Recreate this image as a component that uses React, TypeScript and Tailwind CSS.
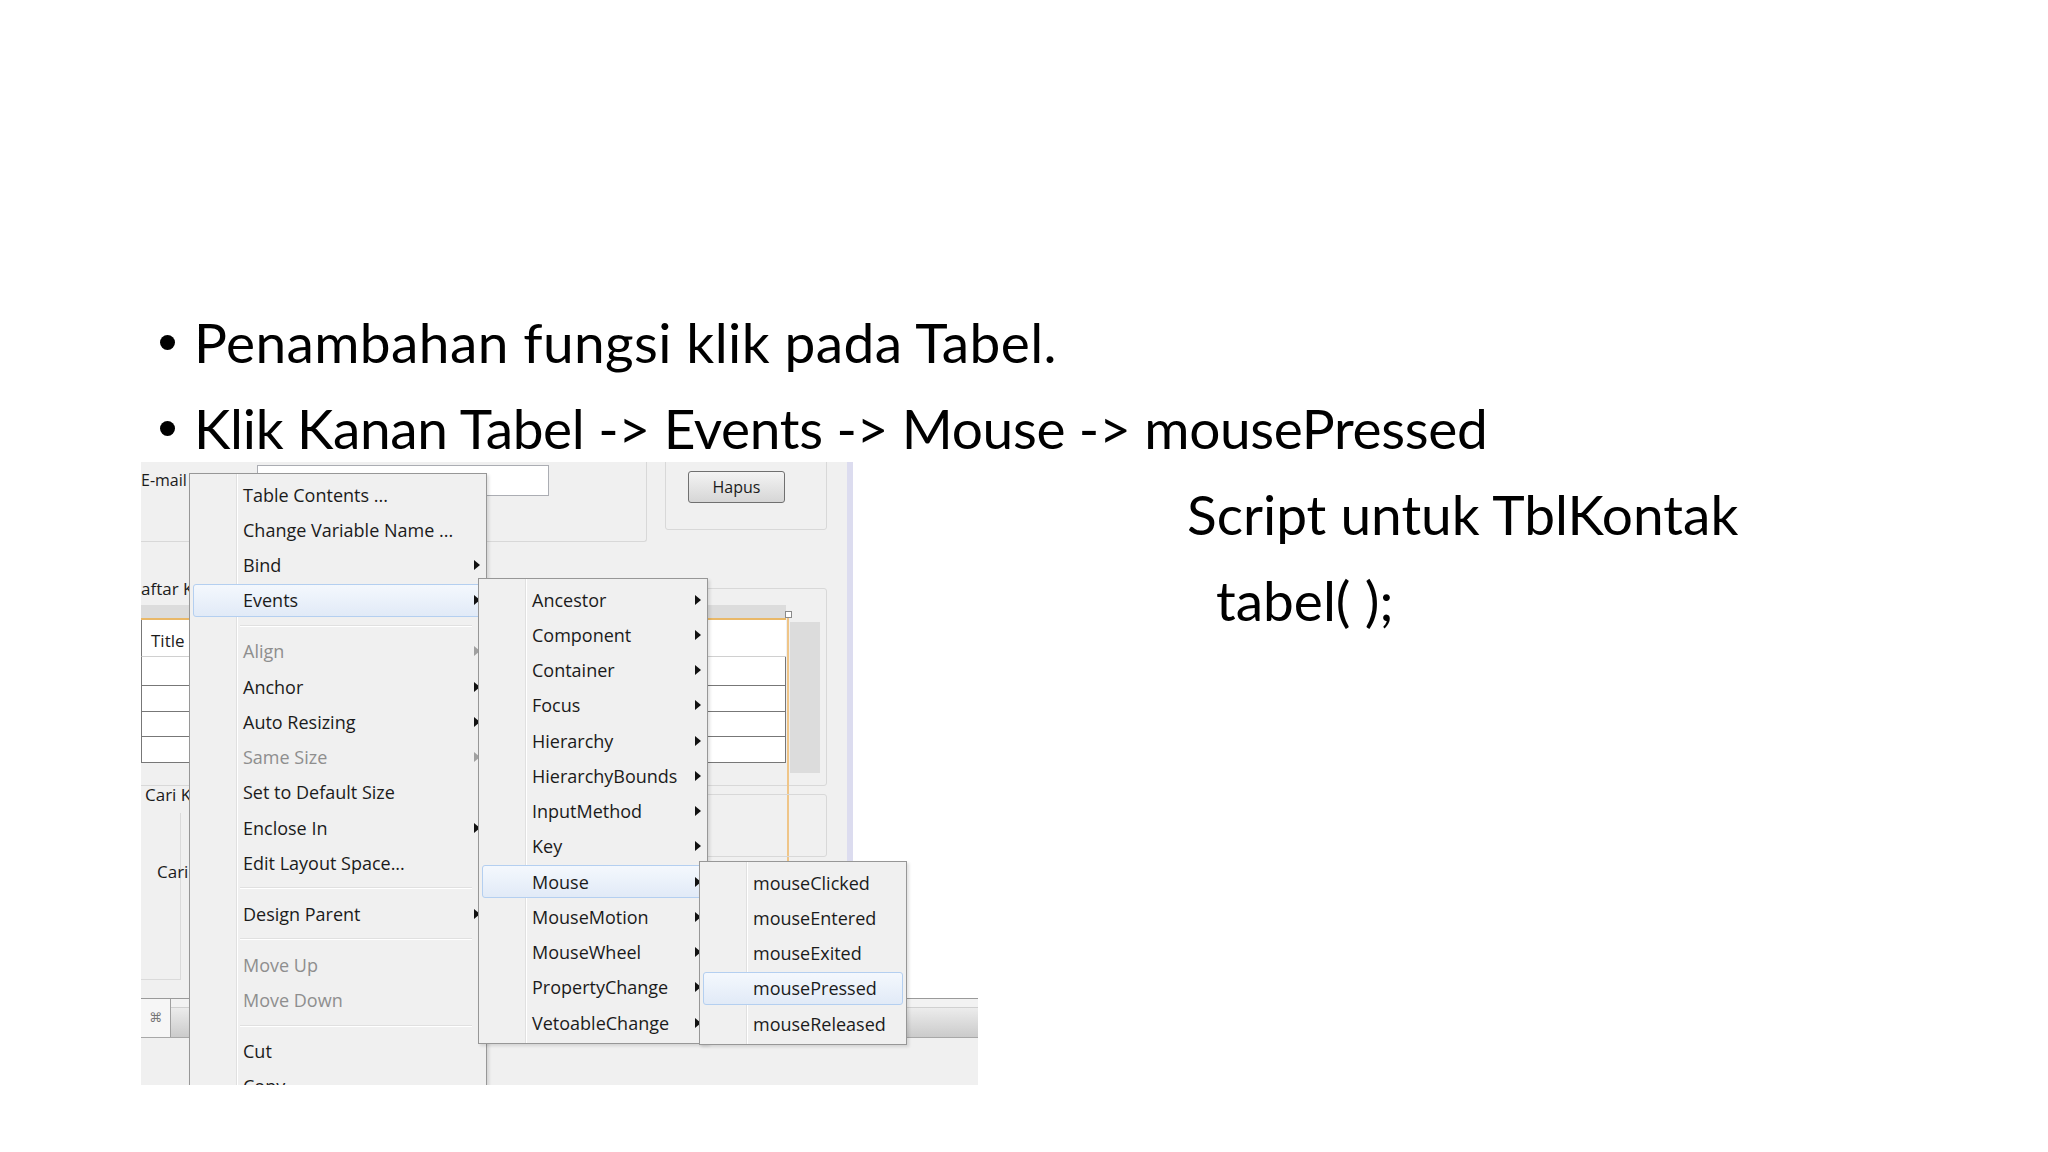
import React from 'react';

type MI = { label: string; disabled?: boolean; arrow?: boolean; hl?: boolean } | 'sep';

const Arrow = ({ gray }: { gray?: boolean }) => (
  <svg width="6" height="10" viewBox="0 0 6 10" className="ml-auto mr-[2px] shrink-0">
    <path d="M0 0 L6 5 L0 10 Z" fill={gray ? '#a0a0a0' : '#111'} />
  </svg>
);

function Menu({ items, className }: { items: MI[]; className: string }) {
  return (
    <div
      className={`absolute z-10 bg-[#f0f0f0] border border-[#979797] py-[3px] shadow-[2px_2px_3px_rgba(0,0,0,0.12)] ${className}`}
    >
      <div className="absolute inset-y-0 left-[46px] w-[2px] border-l border-[#e0e0e0] bg-white" />
      {items.map((it, i) =>
        it === 'sep' ? (
          <div key={i} className="relative h-[15.75px] flex items-center pl-[50px] pr-[14px]">
            <div className="w-full h-[2px] border-t border-[#e0e0e0] bg-white" />
          </div>
        ) : (
          <div key={i} className="relative h-[35.25px] px-[3px] py-[1px] flex">
            <div
              className={`flex-1 flex items-center pl-[49px] rounded-[3px] border ${
                it.hl
                  ? 'border-[#b4cff0] bg-linear-to-b from-[#f4f8fd] to-[#e1eaf7]'
                  : 'border-transparent'
              }`}
            >
              <span
                className={`text-[18px] leading-none whitespace-nowrap ${
                  it.disabled ? 'text-[#8e8e8e]' : 'text-[#1b1b1b]'
                }`}
              >
                {it.label}
              </span>
              {it.arrow && <Arrow gray={it.disabled} />}
            </div>
          </div>
        )
      )}
    </div>
  );
}

const mainItems: MI[] = [
  { label: 'Table Contents ...' },
  { label: 'Change Variable Name ...' },
  { label: 'Bind', arrow: true },
  { label: 'Events', arrow: true, hl: true },
  'sep',
  { label: 'Align', arrow: true, disabled: true },
  { label: 'Anchor', arrow: true },
  { label: 'Auto Resizing', arrow: true },
  { label: 'Same Size', arrow: true, disabled: true },
  { label: 'Set to Default Size' },
  { label: 'Enclose In', arrow: true },
  { label: 'Edit Layout Space...' },
  'sep',
  { label: 'Design Parent', arrow: true },
  'sep',
  { label: 'Move Up', disabled: true },
  { label: 'Move Down', disabled: true },
  'sep',
  { label: 'Cut' },
  { label: 'Copy' },
];

const eventItems: MI[] = [
  'Ancestor',
  'Component',
  'Container',
  'Focus',
  'Hierarchy',
  'HierarchyBounds',
  'InputMethod',
  'Key',
  'Mouse',
  'MouseMotion',
  'MouseWheel',
  'PropertyChange',
  'VetoableChange',
].map((l) => ({ label: l, arrow: true, hl: l === 'Mouse' }));

const mouseItems: MI[] = ['mouseClicked', 'mouseEntered', 'mouseExited', 'mousePressed', 'mouseReleased'].map((l) => ({
  label: l,
  hl: l === 'mousePressed',
}));

function Screenshot() {
  return (
    <div className="relative w-[837px] h-[623px] overflow-hidden font-['Open_Sans',sans-serif] text-[#1b1b1b] shrink-0">
      {/* top part */}
      <div className="flex h-[536px]">
        <div className="relative w-[712px] h-full bg-[#f0f0f0] border-r-[6px] border-[#dcdcef] overflow-hidden">
          {/* E-mail panel */}
          <div className="absolute left-[-10px] top-[-10px] w-[516px] h-[90px] border-r border-b border-[#d8d8d8] rounded-br-[3px]" />
          <div className="absolute left-0 top-[6px] text-[16px]">E-mail</div>
          <div className="absolute left-[116px] top-[3px] w-[292px] h-[31px] bg-white border border-[#abadb3]" />
          {/* Hapus panel */}
          <div className="absolute left-[524px] top-[-10px] w-[162px] h-[78px] border border-[#d8d8d8] rounded-[3px]" />
          <div className="absolute left-[547px] top-[9px] w-[97px] h-[32px] rounded-[3px] border border-[#707070] bg-linear-to-b from-[#f4f4f4] to-[#d6d6d6] flex items-center justify-center text-[16px]">
            Hapus
          </div>
          {/* Daftar panel */}
          <div className="absolute left-[-10px] top-[126px] w-[696px] h-[198px] border border-[#d8d8d8] rounded-[3px]" />
          <div className="absolute left-0 top-[114px] text-[17px] bg-[#f0f0f0] pr-[4px]">aftar Kontak</div>
          {/* table */}
          <div className="absolute left-0 top-[143px] w-[645px] flex flex-col">
            <div className="h-[13px] bg-[#dcdcdc]" />
            <div className="h-[2px] bg-[#e9b868]" />
            <div className="h-[37px] bg-white border-l border-[#777] border-b border-b-[#d0d0d0] flex items-center pt-[6px] pl-[9px] text-[17px]">
              Title
            </div>
            <div className="h-[29px] bg-white border-l border-r border-[#777] border-b" />
            <div className="h-[26px] bg-white border-l border-r border-[#777] border-b" />
            <div className="h-[25px] bg-white border-l border-r border-[#777] border-b" />
            <div className="h-[26px] bg-white border-l border-r border-[#777] border-b" />
          </div>
          <div className="absolute left-[646px] top-[156px] w-[2px] h-[380px] bg-[#efc588]" />
          <div className="absolute left-[644px] top-[149px] w-[7px] h-[7px] border border-[#8a8a8a] bg-white" />
          <div className="absolute left-[649px] top-[160px] w-[30px] h-[151px] bg-[#dcdcdc]" />
          {/* lower panels */}
          <div className="absolute left-[560px] top-[332px] w-[126px] h-[63px] border border-[#d8d8d8] rounded-[3px]" />
          <div className="absolute left-[-10px] top-[351px] w-[50px] h-[167px] border-r border-b border-[#dadada]" />
          <div className="absolute left-[4px] top-[320px] text-[17px]">Cari Kontak</div>
          <div className="absolute left-[16px] top-[397px] text-[17px]">Cari</div>
        </div>
        <div className="flex-1 bg-white" />
      </div>
      {/* bottom part */}
      <div className="h-[87px] bg-[#f0f0f0]">
        <div className="h-[40px] flex border-t border-[#9a9a9a] border-b border-b-[#a8a8a8]">
          <div className="w-[30px] bg-[#f6f6f6] border-r border-[#a0a0a0] flex items-center justify-center text-[13px] text-[#777] font-['DejaVu_Sans',sans-serif]">
            ⌘
          </div>
          <div className="flex-1 flex flex-col">
            <div className="h-[9px] bg-[#f2f2f2] border-b border-[#d0d0d0]" />
            <div className="flex-1 bg-linear-to-b from-[#ececec] to-[#cbcbcb]" />
          </div>
        </div>
      </div>

      <Menu items={mainItems} className="left-[48px] top-[11px] w-[298px]" />
      <Menu items={eventItems} className="left-[337px] top-[116px] w-[230px]" />
      <Menu items={mouseItems} className="left-[558px] top-[399px] w-[208px]" />
    </div>
  );
}

export default function App() {
  return (
    <div className="w-[2048px] h-[1152px] bg-white overflow-hidden font-['Lato',sans-serif] text-black">
      <div className="pt-[299px] pl-[160px]">
        <div className="flex h-[86px] items-center text-[55px] leading-[86px] whitespace-nowrap">
          <span className="w-[15px] h-[15px] rounded-full bg-black shrink-0 mr-[19px]" />
          <span className="tracking-[0.4px]">Penambahan fungsi klik pada Tabel.</span>
        </div>
        <div className="flex h-[86px] items-center text-[55px] leading-[86px] whitespace-nowrap">
          <span className="w-[15px] h-[15px] rounded-full bg-black shrink-0 mr-[19px]" />
          <span className="tracking-[-0.33px]">Klik Kanan Tabel -&gt; Events -&gt; Mouse -&gt; mousePressed</span>
        </div>
      </div>
      <div className="flex -mt-[9px] pl-[141px]">
        <Screenshot />
        <div className="ml-[209px] pt-[9px] text-[55px] leading-[86px] whitespace-nowrap">
          <div>Script untuk TblKontak</div>
          <div className="pl-[29px]">tabel( );</div>
        </div>
      </div>
    </div>
  );
}
